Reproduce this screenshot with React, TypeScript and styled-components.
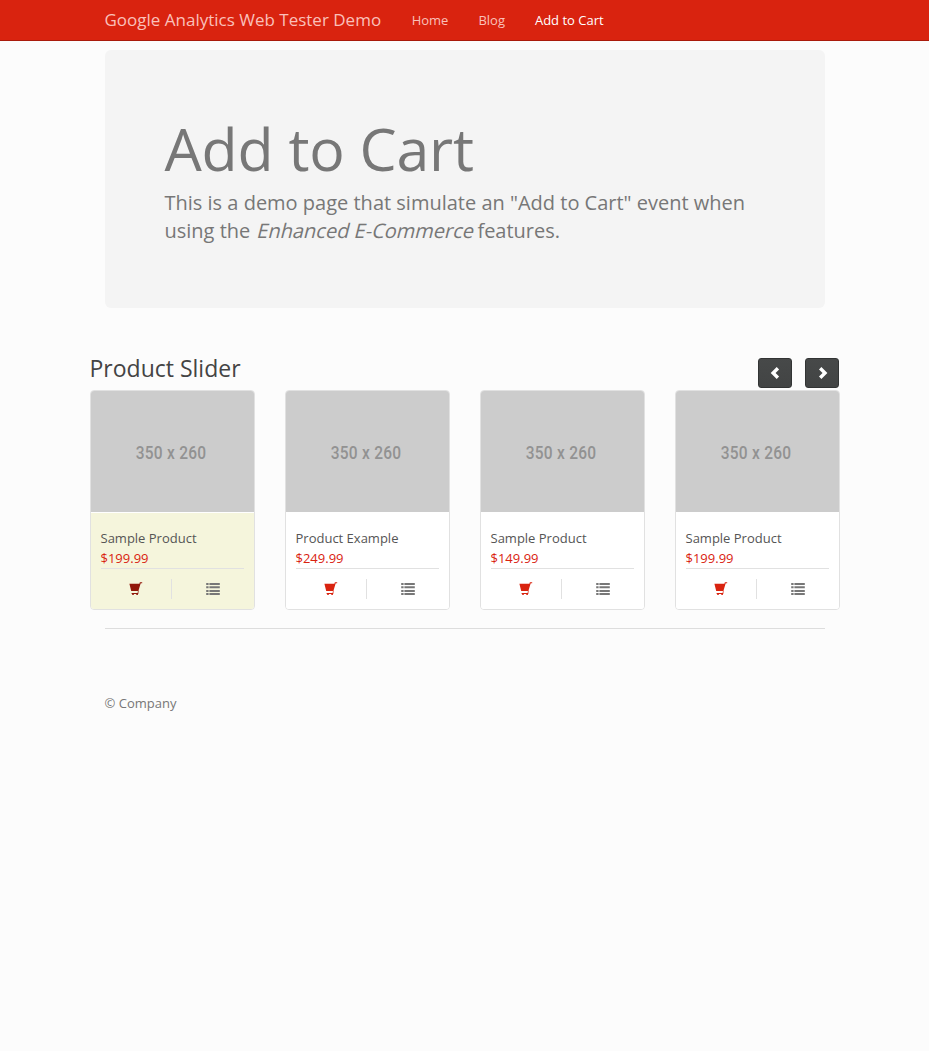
import React from 'react';
import styled, { createGlobalStyle } from 'styled-components';

const GlobalStyle = createGlobalStyle`
  *, *::before, *::after { box-sizing: border-box; }
  body {
    margin: 0;
    background: #fcfcfc;
    color: #777;
    font: 13px/1.42857143 "Open Sans", sans-serif;
  }
  a { color: inherit; text-decoration: none; }
`;

const Navbar = styled.header`
  height: 41px;
  background: #d9230f;
  border-bottom: 1px solid #a91b0c;
`;

const Container = styled.div`
  width: 750px;
  margin: 0 auto;
  padding: 0 15px;
`;

const NavInner = styled(Container)`
  display: flex;
  height: 40px;
  align-items: center;
`;

const Brand = styled.a`
  margin-right: 15.5px;
  color: #fac0ba;
  font-size: 17px;
  line-height: 20px;
`;

const NavLink = styled.a<{ $active?: boolean }>`
  padding: 0 15px;
  line-height: 18px;
  color: ${(p) => (p.$active ? '#fff' : '#fac0ba')};
`;

const Jumbotron = styled.section`
  margin: 9px 0 48px;
  padding: 66px 60px 60px;
  min-height: 258px;
  background: #f4f4f4;
  border-radius: 6px;
  h1 {
    margin: 0 0 8px;
    font-size: 59px;
    font-weight: 400;
    line-height: 65px;
    letter-spacing: -0.23px;
  }
  p {
    margin: 0;
    font-size: 20px;
    line-height: 28px;
  }
`;

const Slanted = styled.em`
  display: inline-block;
  font-style: normal;
  transform: skewX(-14deg);
  transform-origin: 50% 76%;
`;

const Slider = styled.section`
  margin: 0 -15px;
`;

const SliderHeader = styled.div`
  display: flex;
  justify-content: space-between;
  height: 34px;
`;

const SliderTitle = styled.h3`
  margin: 0;
  color: #444;
  font-size: 23px;
  font-weight: 400;
  line-height: 25px;
`;

const Controls = styled.div`
  display: flex;
  gap: 13px;
  padding: 2px 1px 0 0;
`;

const ControlButton = styled.button`
  display: flex;
  align-items: center;
  justify-content: center;
  width: 34px;
  height: 30px;
  padding: 0 0 1px;
  color: #fff;
  background: linear-gradient(#474949, #424444);
  border: 1px solid #323434;
  border-radius: 3px;
`;

const Cards = styled.div`
  display: grid;
  grid-template-columns: repeat(4, 165px);
  gap: 30px;
`;

const Card = styled.article`
  height: 220px;
  background: #fff;
  border: 1px solid #e1e1e1;
  border-radius: 4px;
  overflow: hidden;
`;

const Placeholder = styled.div`
  display: flex;
  align-items: center;
  justify-content: center;
  height: 121px;
  padding: 2px 1px 0 0;
  margin-bottom: 1px;
  background: #ccc;
  color: #929292;
  font: 500 18px/20px Roboto, sans-serif;
  span {
    transform: scaleX(0.86);
    letter-spacing: 0.3px;
    white-space: nowrap;
  }
`;

const Info = styled.div<{ $hover?: boolean }>`
  height: 96px;
  padding: 15px 10px 0;
  background: ${(p) => (p.$hover ? '#f5f5dc' : '#fff')};
`;

const Name = styled.div`
  color: #555;
  line-height: 20px;
`;

const Price = styled.div`
  color: #d9230f;
  line-height: 20px;
`;

const Actions = styled.div`
  display: flex;
  padding-top: 10px;
  border-top: 1px solid #e1e1e1;
`;

const Action = styled.a<{ $first?: boolean; $hover?: boolean }>`
  display: flex;
  align-items: center;
  justify-content: center;
  width: ${(p) => (p.$first ? '71px' : '72px')};
  height: 20px;
  padding-left: ${(p) => (p.$first ? '0' : '10px')};
  border-right: ${(p) => (p.$first ? '1px solid #e1e1e1' : '0')};
  color: ${(p) => (!p.$first ? '#777' : p.$hover ? '#91170a' : '#d9230f')};
`;

const Footer = styled.footer`
  margin-top: 18px;
  padding-top: 65px;
  border-top: 1px solid #ddd;
  line-height: 19px;
`;

const CartIcon = () => (
  <svg width="14" height="14" viewBox="0 0 14 14" fill="currentColor">
    <path d="M0.4 1.7H10.4L10.9 0.2H13.2V1.2H11.7L9.4 9H2.2Z" />
    <path d="M9 8.8H9.6L9.3 12H8.9V12.9H7.3V12H4.8V12.9H3.2V12H2.6V11.1H8.6Z" />
  </svg>
);

const ListIcon = () => (
  <svg width="14" height="14" viewBox="0 0 14 14" fill="currentColor">
    <path d="M0.2 1h2.4v2H0.2zM3.4 1h10.4v2h-10.4zM0.2 4.2h2.4v2H0.2zM3.4 4.2h10.4v2h-10.4zM0.2 7.9h2.4v2H0.2zM3.4 7.9h10.4v2h-10.4zM0.2 11.1h2.4v2H0.2zM3.4 11.1h10.4v2h-10.4z" />
  </svg>
);

const Chevron = ({ flip }: { flip?: boolean }) => (
  <svg width="14" height="14" viewBox="0 0 14 14">
    <path
      d={flip ? 'M5.2 2.2L10 7L5.2 11.8' : 'M9.9 2.2L5.1 7L9.9 11.8'}
      fill="none"
      stroke="currentColor"
      strokeWidth="3.4"
    />
  </svg>
);

const products = [
  { name: 'Sample Product', price: '$199.99', hover: true },
  { name: 'Product Example', price: '$249.99' },
  { name: 'Sample Product', price: '$149.99' },
  { name: 'Sample Product', price: '$199.99' },
];

export default function App() {
  return (
    <>
      <GlobalStyle />
      <Navbar>
        <NavInner>
          <Brand href="#">Google Analytics Web Tester Demo</Brand>
          <NavLink href="#">Home</NavLink>
          <NavLink href="#">Blog</NavLink>
          <NavLink href="#" $active>Add to Cart</NavLink>
        </NavInner>
      </Navbar>
      <Container>
        <Jumbotron>
          <h1>Add to Cart</h1>
          <p>
            This is a demo page that simulate an "Add to Cart" event when using the{' '}
            <Slanted>Enhanced E-Commerce</Slanted> features.
          </p>
        </Jumbotron>
        <Slider>
          <SliderHeader>
            <SliderTitle>Product Slider</SliderTitle>
            <Controls>
              <ControlButton aria-label="Previous"><Chevron /></ControlButton>
              <ControlButton aria-label="Next"><Chevron flip /></ControlButton>
            </Controls>
          </SliderHeader>
          <Cards>
            {products.map((p, i) => (
              <Card key={i}>
                <Placeholder><span>350 x 260</span></Placeholder>
                <Info $hover={p.hover}>
                  <Name>{p.name}</Name>
                  <Price>{p.price}</Price>
                  <Actions>
                    <Action href="#" $first $hover={p.hover} aria-label="Add to cart"><CartIcon /></Action>
                    <Action href="#" aria-label="Details"><ListIcon /></Action>
                  </Actions>
                </Info>
              </Card>
            ))}
          </Cards>
        </Slider>
        <Footer>© Company</Footer>
      </Container>
    </>
  );
}
